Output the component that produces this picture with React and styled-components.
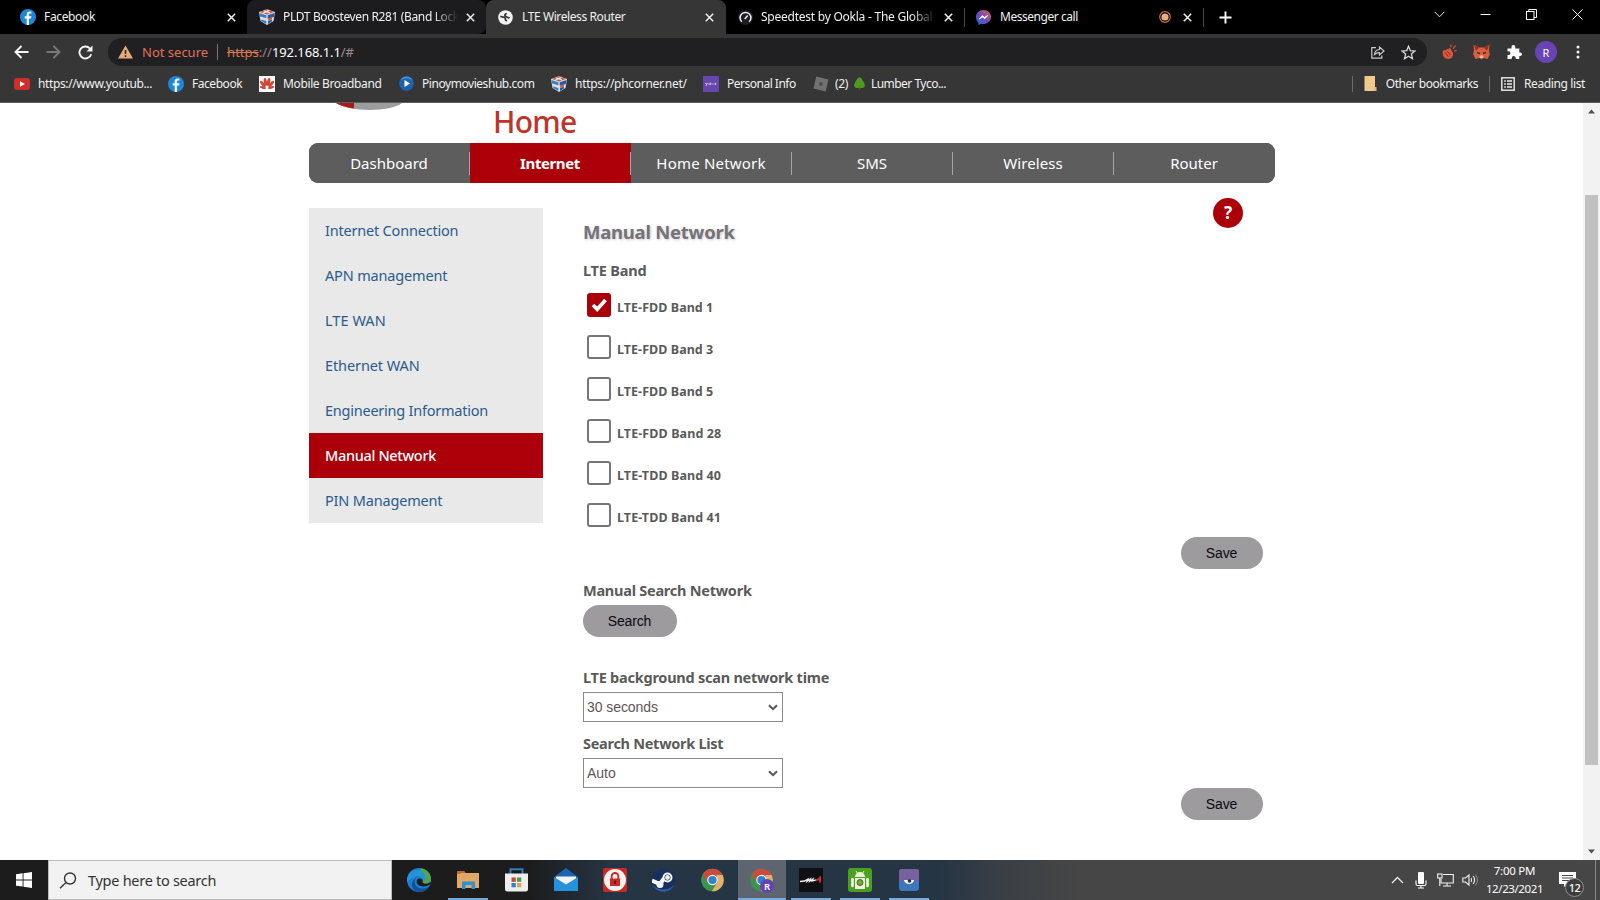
import React from 'react';
import styled, { createGlobalStyle } from 'styled-components';

const Global = createGlobalStyle`
  * { box-sizing: border-box; }
  html, body { margin: 0; padding: 0; background: #fff; overflow: hidden; }
  body { font-family: "Noto Sans", "Open Sans", sans-serif; }
  svg { display: block; flex: none; }
`;

const Screen = styled.div`
  width: 1600px;
  height: 900px;
  display: flex;
  flex-direction: column;
  overflow: hidden;
  background: #fff;
`;

const Text = styled.span`
  letter-spacing: ${p => p.$ls || 0}px;
  white-space: pre;
`;

/* ---------- browser chrome ---------- */
const TabStrip = styled.div`
  height: 34px;
  flex: none;
  display: flex;
  background: #000;
`;

const Tab = styled.div`
  width: ${p => p.$w}px;
  height: 34px;
  display: flex;
  align-items: center;
  padding: 0 ${p => p.$pr ?? 11}px 0 ${p => p.$pl}px;
  background: ${p => p.$bg || '#000'};
  border-radius: ${p => p.$radius || '0'};
  color: #f1f1f1;
  font-size: 12px;
`;

const TabTitle = styled.div`
  flex: 1;
  min-width: 0;
  overflow: hidden;
  margin-left: ${p => p.$gap ?? 8}px;
  line-height: 20px;
  ${p => p.$fade && 'mask-image: linear-gradient(90deg, #000 86%, transparent 100%);'}
`;

const TabDivider = styled.div`
  width: 1px;
  height: 19px;
  margin-top: 8px;
  background: #4a4a4a;
`;

const TabIcons = styled.div`
  display: flex;
  align-items: center;
  gap: 12px;
  margin-left: 8px;
`;

const NewTab = styled.div`
  display: flex;
  align-items: center;
  padding-left: 15px;
`;

const WindowButtons = styled.div`
  margin-left: auto;
  display: flex;
  height: 28px;
  align-items: center;
`;

const WindowButton = styled.div`
  width: 46px;
  display: flex;
  justify-content: center;
`;

const Toolbar = styled.div`
  height: 36px;
  flex: none;
  display: flex;
  align-items: center;
  background: #363636;
  padding: 0 20px 0 14px;
`;

const NavIcons = styled.div`
  display: flex;
  gap: 17px;
  width: 94px;
`;

const Omnibox = styled.div`
  width: 1319px;
  height: 28px;
  border-radius: 14px;
  background: #202022;
  display: flex;
  align-items: center;
  padding: 0 11px 0 10px;
  font-size: 13px;
`;

const NotSecure = styled.span`
  color: #e0705a;
  margin-left: 9px;
`;

const UrlDivider = styled.span`
  width: 1px;
  height: 16px;
  background: #77777a;
  margin: 0 9px;
`;

const Url = styled.div`
  flex: 1;
  white-space: pre;
`;

const UrlPart = styled(Text)`
  color: ${p => p.$c};
  ${p => p.$strike && 'text-decoration: line-through;'}
`;

const OmniIcons = styled.div`
  display: flex;
  gap: 16px;
`;

const Extensions = styled.div`
  display: flex;
  align-items: center;
  margin-left: auto;
  gap: 16px;
`;

const Avatar = styled.div`
  width: 22px;
  height: 22px;
  border-radius: 50%;
  background: #6844b4;
  color: #fff;
  font-size: 11px;
  display: flex;
  align-items: center;
  justify-content: center;
  margin: 0 3px 0 -3px;
`;

const Bookmarks = styled.div`
  height: 33px;
  flex: none;
  display: flex;
  align-items: center;
  background: #363636;
  border-bottom: 1px solid #5c5c5c;
  padding: 0 15px 5px 14px;
  font-size: 12px;
  line-height: 20px;
  color: #f1f1f1;
`;

const Bookmark = styled.div`
  display: flex;
  align-items: center;
  gap: ${p => p.$gap ?? 8}px;
  width: ${p => p.$w ? p.$w + 'px' : 'auto'};
`;

const BookmarkDivider = styled.div`
  width: 1px;
  height: 16px;
  background: #6b6b6b;
  margin: 0 ${p => p.$r}px 0 ${p => p.$l}px;
`;

const BookmarksRight = styled.div`
  display: flex;
  align-items: center;
  margin-left: auto;
`;

/* ---------- page ---------- */
const Viewport = styled.div`
  height: 757px;
  flex: none;
  display: flex;
  background: #fff;
`;

const Page = styled.div`
  width: 966px;
  margin-left: 309px;
  flex: none;
`;

const Brand = styled.div`
  height: 40px;
  display: flex;
  padding-left: 27px;
`;

const BrandName = styled.div`
  margin-left: 91px;
  font-size: 30px;
  line-height: 38px;
  color: #c0332a;
  font-weight: 500;
`;

const MainNav = styled.div`
  height: 40px;
  display: flex;
  border-radius: 9px;
  overflow: hidden;
  background: #5d5d5d;
`;

const MainNavItem = styled.div`
  width: 161px;
  height: 40px;
  display: flex;
  align-items: center;
  justify-content: center;
  padding-right: 1px;
  font-size: 15px;
  color: #fff;
  font-weight: ${p => p.$active ? 700 : 400};
  background: ${p => p.$last ? 'none' : 'linear-gradient(#a5a5a5, #a5a5a5) right 0 top 9px / 1px 23px no-repeat'}
    ${p => p.$active ? '#ab0009' : '#5d5d5d'};
`;

const Body = styled.div`
  display: flex;
  padding-top: 25px;
`;

const SideMenu = styled.div`
  width: 234px;
  height: 315px;
  background: #e9e9e9;
`;

const SideItem = styled.div`
  height: 45px;
  line-height: 45px;
  padding-left: 16px;
  font-size: 14.5px;
  font-weight: ${p => p.$active ? 500 : 400};
  color: ${p => p.$active ? '#fff' : '#2b5b8c'};
  background: ${p => p.$active ? '#ab0009' : 'transparent'};
`;

const Content = styled.div`
  width: 680px;
  margin-left: 40px;
  color: #5a5a5a;
`;

const Heading = styled.div`
  display: flex;
  justify-content: space-between;
  height: 49px;
  padding-right: 20px;
  font-size: 18.5px;
  font-weight: 700;
  line-height: 48px;
  color: #747379;
  text-shadow: 1px 1px 3px #d0c8c8;
`;

const Help = styled.div`
  width: 30px;
  height: 30px;
  margin-top: -10px;
  border-radius: 50%;
  background: #ab0009;
  color: #fff;
  font-size: 17px;
  line-height: 30px;
  text-align: center;
  text-shadow: none;
`;

const Label = styled.div`
  height: ${p => p.$h}px;
  margin-top: ${p => p.$mt || 0}px;
  font-size: 14.5px;
  font-weight: 700;
  line-height: 26px;
`;

const BandRow = styled.div`
  height: 42px;
  display: flex;
  padding-left: 4px;
  font-size: 12.5px;
  font-weight: 700;
  line-height: 30px;
  gap: 6px;
`;

const CheckBox = styled.div`
  width: 24px;
  height: 24px;
  border: 2px solid ${p => p.$checked ? '#ab0009' : '#75757b'};
  border-radius: 3px;
  background: ${p => p.$checked ? '#ab0009' : '#fff'};
`;

const Bands = styled.div`
  height: 244px;
`;

const ActionRow = styled.div`
  height: 32px;
  display: flex;
  justify-content: flex-end;
`;

const Pill = styled.div`
  width: ${p => p.$w}px;
  height: 32px;
  padding-right: 1px;
  border-radius: 16px;
  background: #9d9b9d;
  color: #0c0812;
  font-family: "Liberation Sans", Arial, sans-serif;
  font-size: 14px;
  line-height: 32px;
  text-align: center;
`;

const Select = styled.div`
  width: 200px;
  height: 30px;
  border: 1px solid #8a8a8a;
  display: flex;
  align-items: center;
  justify-content: space-between;
  padding: 0 4px 0 3px;
  font-family: "Liberation Sans", Arial, sans-serif;
  font-size: 14px;
  color: #5f5555;
`;

const ScrollTrack = styled.div`
  width: 17px;
  height: 757px;
  margin-left: auto;
  background: #f2f2f2;
  display: flex;
  flex-direction: column;
  align-items: center;
  justify-content: space-between;
  padding: 6px 0 6px;
`;

const ScrollThumb = styled.div`
  width: 13px;
  height: 570px;
  background: #c1c1c1;
  margin: 81px 0 auto;
`;

/* ---------- taskbar ---------- */
const Taskbar = styled.div`
  height: 40px;
  flex: none;
  display: flex;
  background: linear-gradient(90deg, #1c1c1d 0 530px, #263544 610px 940px, #3a3f45 1000px, #464646 1080px);
`;

const Start = styled.div`
  width: 48px;
  display: flex;
  align-items: center;
  justify-content: center;
`;

const SearchBox = styled.div`
  width: 344px;
  height: 40px;
  border: 1px solid #b9b9b9;
  background: #f2f2f2;
  display: flex;
  align-items: center;
  padding-left: 10px;
  gap: 11px;
  font-size: 14.5px;
  color: #333;
`;

const Apps = styled.div`
  display: flex;
  padding-left: 2px;
`;

const AppButton = styled.div`
  width: 49px;
  height: 40px;
  display: flex;
  align-items: center;
  justify-content: center;
  background: ${p => p.$line
    ? `linear-gradient(#76a9dc, #76a9dc) center bottom / ${p.$active ? 48 : 40}px 2px no-repeat`
    : 'none'} ${p => p.$active ? ', linear-gradient(#5d6670, #5d6670) center / 48px 40px no-repeat' : ''};
`;

const Tray = styled.div`
  margin-left: auto;
  display: flex;
  align-items: center;
  color: #fff;
`;

const TrayIcon = styled.div`
  width: ${p => p.$w}px;
  display: flex;
  justify-content: center;
`;

const Clock = styled.div`
  width: 65px;
  display: flex;
  flex-direction: column;
  align-items: center;
  font-size: 11.5px;
  line-height: 18px;
`;

const Notify = styled.div`
  position: relative;
  width: 48px;
  height: 40px;
  padding: 12px 0 0 12px;
`;

const Count = styled.div`
  position: absolute;
  left: 18px;
  top: 18px;
  width: 19px;
  height: 19px;
  border-radius: 50%;
  border: 1px solid #8d8d8d;
  background: #3c3c3c;
  font-size: 11px;
  font-weight: 500;
  line-height: 17px;
  text-align: center;
  letter-spacing: -0.5px;
`;

const ShowDesktop = styled.div`
  width: 5px;
  height: 40px;
  border-left: 1px solid #8b8b8b;
`;

/* ---------- icons ---------- */
const FacebookIcon = () => (
  <svg width="16" height="16" viewBox="0 0 16 16">
    <circle cx="8" cy="8" r="8" fill="#1e87d8" />
    <path d="M8.9 16V9.6h2.1l.4-2.3H8.9V5.9c0-.8.4-1.3 1.4-1.3h1.1V2.7a9 9 0 0 0-1.7-.1C7.8 2.600 6.700 3.700 6.700 5.600v1.700H4.700v2.300h2V16z" fill="#fff" />
  </svg>
);
const CubeIcon = () => (
  <svg width="16" height="16" viewBox="0 0 16 16">
    <path d="M0 3 8 .3 16 3l-1.500 9L8 16 1.500 12z" fill="#d9dfe8" />
    <path d="M1 3 8 .6 15 3 8 5.400z" fill="#c65a3e" />
    <path d="M5 1.700 11 4M10.500 1.300 4 4.200" stroke="#eee" strokeWidth="1.200" />
    <path d="M.5 4 7.400 6.200v3L1.100 7.500zM2.500 10.500l4.800 1.500v3L2 12z" fill="#3f7fc0" />
    <path d="m15.500 4-6.800 2.200v3.500L14.800 8zM9 12l4-1.500-.3 2.300L9 15z" fill="#2b5a9c" />
    <path d="M9.200 9.500 13 8.200v2L9.200 12z" fill="#d05a3c" />
  </svg>
);
const GlobeIcon = () => (
  <svg width="15" height="15" viewBox="0 0 15 15">
    <circle cx="7.500" cy="7.500" r="7.300" fill="#f3f3f3" />
    <path d="M2.200 6.300c1.300 0 1.800.9 3.200.9 1.500 0 2.300.8 2 1.900-.3.900.3 1.700 1.700 1.400M11.500 8.200c-1-.8-2.200-.4-2.700-1.300-.5-.9-2-.6-2-1.700 0-1 1.300-.8 1.500-2" fill="none" stroke="#363636" strokeWidth="1.700" />
  </svg>
);
const SpeedIcon = () => (
  <svg width="15" height="15" viewBox="0 0 15 15" fill="none">
    <circle cx="7.500" cy="7.500" r="7.500" fill="#1c1c24" />
    <path d="M3.800 11.800a5.400 5.400 0 1 1 7.400 0" stroke="#eee" strokeWidth="1.500" />
    <path d="m6.700 8.900 3-3.500" stroke="#eee" strokeWidth="1.500" />
  </svg>
);
const MessengerIcon = () => (
  <svg width="15" height="15" viewBox="0 0 15 15">
    <defs>
      <linearGradient id="msg" x1="0" y1="1" x2="1" y2="0">
        <stop offset="0" stopColor="#1f74d8" />
        <stop offset=".45" stopColor="#6b48c0" />
        <stop offset="1" stopColor="#e0604e" />
      </linearGradient>
    </defs>
    <path d="M7.500 0C3.200 0 0 3 0 7c0 2.200.8 4 2.300 5.200V15l2.500-1.300c4.800 1.300 10.200-1.600 10.200-6.700 0-4-3.200-7-7.500-7z" fill="url(#msg)" />
    <path d="m3.200 9 3-3.400 2.200 1.700 3.400-1.900-3 3.400-2.200-1.700z" fill="#fff" stroke="#fff" strokeWidth=".7" />
  </svg>
);
const CloseIcon = () => (
  <svg width="9" height="9" viewBox="0 0 9 9"><path d="m.8.8 7.400 7.400M8.200.8.8 8.200" stroke="#f0f0f0" strokeWidth="1.500" /></svg>
);
const RecordIcon = () => (
  <svg width="12" height="12" viewBox="0 0 12 12"><circle cx="6" cy="6" r="5.300" fill="none" stroke="#c9695a" strokeWidth="1.200" /><circle cx="6" cy="6" r="3.600" fill="#e8b07c" /></svg>
);
const ArrowIcon = ({ flip, color }) => (
  <svg width="15" height="14" viewBox="0 0 15 14" transform={flip ? 'scale(-1 1)' : undefined}>
    <path d="M14.500 7H1.500M7.500 1 1.500 7l6 6" fill="none" stroke={color} strokeWidth="1.900" />
  </svg>
);
const ReloadIcon = () => (
  <svg width="15" height="15" viewBox="0 0 15 15">
    <path d="M13.200 9.200A6 6 0 1 1 11.800 3.300l1 1" fill="none" stroke="#f5f5f5" strokeWidth="1.900" />
    <path d="M14.500.5v6h-6z" fill="#f5f5f5" />
  </svg>
);
const WarnIcon = () => (
  <svg width="15" height="14" viewBox="0 0 15 14"><path d="M7.500.5 15 13.500H0z" fill="#e5aa78" /><path d="M7.500 5v4M7.500 10.300v1.700" stroke="#242424" strokeWidth="1.500" /></svg>
);
const ShareIcon = () => (
  <svg width="15" height="15" viewBox="0 0 15 15" fill="none" stroke="#c9c9c9" strokeWidth="1.200">
    <path d="M6 2.600H1.800v10.600h10V10.500" />
    <path d="M4.500 9.500c.3-3 2-4.800 5-5V2l4.500 4-4.500 4V7.600c-2 0-3.500.4-5 1.900z" />
  </svg>
);
const StarIcon = () => (
  <svg width="15" height="15" viewBox="0 0 15 15"><path d="m7.500 1.300 1.800 4.300 4.700.4-3.600 3.100 1.100 4.600-4-2.500-4 2.500L4.600 9.100 1 6l4.700-.4z" fill="none" stroke="#d8d8d8" strokeWidth="1.300" /></svg>
);
const ClapIcon = () => (
  <svg width="15" height="16" viewBox="0 0 15 16">
    <path d="M.8 7.500C1 6 2.300 5.300 3.200 6.500L5 5l1.500.3.500-1.200 1.500.5 2.200 3.900c1.400 3.500-1 6.500-4.400 6.500S0 12 .8 7.500z" fill="#d8583f" />
    <path d="m3 8.500 3.200 4M5.300 7.200l3 3.700" stroke="#8e2b22" strokeWidth="1" />
    <path d="M9 3.300 8.700.5M11 4.800l2.500-3.300M12 7.200l3-.8" stroke="#cf4a3b" strokeWidth="1.300" />
  </svg>
);
const FoxIcon = () => (
  <svg width="17" height="16" viewBox="0 0 17 16">
    <path d="m.5.5 5.500 3h5l5.500-3-.5 6 .8 4-2.300 4.500-4-1-2 1.500-2-1.500-4 1L.2 10.500 1 6.500z" fill="#d9603f" />
    <path d="m.8.8 5.200 3-3 3zM16.200.8 11 3.800l3 3z" fill="#9e2c22" />
    <path d="m4 8.500 3 1M13 8.500l-3 1" stroke="#56281f" strokeWidth="1.400" />
    <path d="m6.500 12 2-1 2 1-.5 2H7z" fill="#e7c3a6" />
  </svg>
);
const PuzzleIcon = () => (
  <svg width="16" height="16" viewBox="0 0 16 16"><path d="M1.500 4.500h4V3a1.900 1.900 0 0 1 3.800 0v1.500h4v4h.9a1.800 1.800 0 0 1 0 3.600h-.9V15H9.700v-1a2 2 0 0 0-4 0v1H1.500v-4h1a1.900 1.900 0 0 0 0-3.800h-1z" fill="#fff" /></svg>
);
const DotsIcon = () => (
  <svg width="4" height="14" viewBox="0 0 4 14" fill="#f2f2f2"><circle cx="2" cy="2" r="1.500" /><circle cx="2" cy="7" r="1.500" /><circle cx="2" cy="12" r="1.500" /></svg>
);
const YoutubeIcon = () => (
  <svg width="16" height="12" viewBox="0 0 16 12"><rect width="16" height="12" rx="3" fill="#cf2f2a" /><path d="M6 3.300v5.400L11 6z" fill="#fff" /></svg>
);
const HuaweiIcon = () => (
  <svg width="16" height="16" viewBox="0 0 16 16">
    <rect width="16" height="16" fill="#fff" />
    <g fill="#cf4636">
      <ellipse cx="6.400" cy="6" rx="1.600" ry="4" transform="rotate(-10 6.400 6)" />
      <ellipse cx="9.600" cy="6" rx="1.600" ry="4" transform="rotate(10 9.600 6)" />
      <ellipse cx="3.800" cy="8" rx="1.500" ry="4" transform="rotate(-38 3.800 8)" />
      <ellipse cx="12.200" cy="8" rx="1.500" ry="4" transform="rotate(38 12.200 8)" />
      <ellipse cx="3.800" cy="11.500" rx="3.200" ry="1.300" transform="rotate(12 3.800 11.500)" />
      <ellipse cx="12.200" cy="11.500" rx="3.200" ry="1.300" transform="rotate(-12 12.200 11.500)" />
    </g>
  </svg>
);
const PlayIcon = () => (
  <svg width="15" height="15" viewBox="0 0 15 15"><circle cx="7.500" cy="7.500" r="7.300" fill="#1f62b4" /><path d="M1.500 4a7 7 0 0 1 12 0A12 12 0 0 0 1.500 4z" fill="#3f9ad8" /><path d="M5.500 4v7l5.500-3.500z" fill="#fff" /></svg>
);
const YahooIcon = () => (
  <svg width="16" height="16" viewBox="0 0 16 16"><rect width="16" height="16" fill="#6746ae" /><path d="m2.500 7 1 1.500M4.500 7 3 9.800M5.300 8h1.500M7.300 6.500V9M8.500 8h1.200M10.500 8h1.200M12.700 6.800V9" stroke="#e9e2f6" strokeWidth=".9" /></svg>
);
const RobloxIcon = () => (
  <svg width="16" height="16" viewBox="0 0 16 16"><path d="M3.200.5 15.500 3.500 12.600 15.500.5 12.500z" fill="#717171" /><path d="m6.700 6 3.200.8-.8 3.200-3.200-.8z" fill="#4c4c4c" /></svg>
);
const TreeIcon = () => (
  <svg width="11" height="13" viewBox="0 0 11 13"><path d="M5.500.3C7.500.8 8 2 8.300 3.200 9.500 4 10 5 9.900 6c1.600 1.500 1.300 4.700-1.400 4.900h-6C-.2 10.700-.5 7.500 1.100 6 1 5 1.500 4 2.700 3.200 3 2 3.500.8 5.500.3z" fill="#4e9a20" /><path d="M4.700 10.500h1.600v2.300H4.700z" fill="#7b4a2a" /></svg>
);
const FolderIcon = () => (
  <svg width="13" height="15" viewBox="0 0 13 15"><path d="M.5 0h10.500v11h1.500v4H.5z" fill="#f0c98b" /><path d="M11 11v4" stroke="#d3a767" /></svg>
);
const ReadingIcon = () => (
  <svg width="14" height="14" viewBox="0 0 14 14" fill="none" stroke="#eee"><rect x=".8" y=".8" width="12.400" height="12.400" strokeWidth="1.400" /><path d="M3.200 4h1.600M6 4h5M3.200 7h1.600M6 7h5M3.200 10h1.600M6 10h5" strokeWidth="1.400" /></svg>
);
const LogoArc = () => (
  <svg width="66" height="40" viewBox="0 0 66 40">
    <path d="M0 0h66C54 9.300 14 9.300 0 0z" fill="#9d9d9d" />
    <path d="M0 0h18v5.600C10 4.300 4 2.500 0 0z" fill="#ab1a1a" />
  </svg>
);
const CheckIcon = () => (
  <svg width="20" height="20" viewBox="0 0 20 20"><path d="m4 10 4.200 4.300L16.500 5" fill="none" stroke="#fff" strokeWidth="3.600" /></svg>
);
const SelectArrow = () => (
  <svg width="10" height="7" viewBox="0 0 10 7"><path d="m1 1.200 4 4 4-4" fill="none" stroke="#555" strokeWidth="2" /></svg>
);
const Triangle = ({ down }) => (
  <svg width="7" height="5" viewBox="0 0 7 5"><path d={down ? 'M0 .5h7L3.500 4.500z' : 'M0 4.500h7L3.500.5z'} fill="#505050" /></svg>
);

const WindowsLogo = () => (
  <svg width="16" height="16" viewBox="0 0 16 16" fill="#fff"><path d="M0 2.200 6.600 1.300v6.200H0zM7.500 1.200 16 0v7.500H7.500zM0 8.400h6.600v6.200L0 13.700zM7.500 8.400H16V16l-8.500-1.200z" /></svg>
);
const MagnifierIcon = () => (
  <svg width="18" height="17" viewBox="0 0 18 17" fill="none" stroke="#333" strokeWidth="1.400"><circle cx="11" cy="6.500" r="5.500" /><path d="M7 10.500 1 16.200" /></svg>
);
const EdgeIcon = () => (
  <svg width="24" height="24" viewBox="0 0 24 24">
    <circle cx="12" cy="12" r="12" fill="#1d80cf" />
    <path d="M14 .2C21 1 24.500 7 24 12c-.5 3-3.500 4.500-8 3.600-1.500-.4-1.500-1.200-.6-2.200C17.500 10 16 6 12 4z" fill="#55a64a" />
    <path d="M1 8C4 1 14-.5 18 7c1.500 3 .2 5-1.500 6.500C16 9 12 7 8 8.500 4.500 10 1.500 12 0 14-.2 12 0 10 1 8z" fill="#2493d8" />
    <path d="M9.500 10C6 12.500 8 20 14.500 20.500c3 .2 5.500-.7 7.500-2C19 23 14 25 9.500 23.500 3 21 3.500 12 9.500 10z" fill="#164f9c" />
    <path d="M12 10.500c-2.500.5-3.500 4-.5 6.500 3 2.300 8 1.700 11.500-.5.800-1 .8-2 .5-2.500-3 2.500-8 2.200-8-.2.800-1.500-.5-3.800-3.500-3.300z" fill="#1d1d1f" />
  </svg>
);
const ExplorerIcon = () => (
  <svg width="22" height="20" viewBox="0 0 22 20">
    <path d="M0 1h7l1.500 2H22v15H0z" fill="#e2a765" /><path d="M0 1h7l1.500 2H4L3 4H0z" fill="#c7633f" />
    <path d="M5 19v-7.500h13V19h-3.500v-4h-6v4z" fill="#2d92d2" />
  </svg>
);
const StoreIcon = () => (
  <svg width="23" height="24" viewBox="0 0 23 24">
    <path d="M5.500 7V1.200h12V7" fill="none" stroke="#2f7db8" strokeWidth="2" />
    <path d="M0 5.500h23V21a2.500 2.500 0 0 1-2.500 2.500h-18A2.500 2.500 0 0 1 0 21z" fill="#eee" />
    <path d="M6.500 9.500h4.300v4.300H6.500z" fill="#c54a35" /><path d="M12 9.500h4.300v4.300H12z" fill="#4f9944" />
    <path d="M6.500 15h4.300v4.300H6.500z" fill="#2c85ca" /><path d="M12 15h4.300v4.300H12z" fill="#e0a055" />
  </svg>
);
const MailIcon = () => (
  <svg width="24" height="24" viewBox="0 0 24 24"><path d="M0 9 12 0l12 9v14H0z" fill="#1a63b0" /><path d="M2 8.500h20v5L12 17 2 13z" fill="#f3f3f3" /><path d="m0 9 12 7.500L24 9v14H0z" fill="#2592dc" /></svg>
);
const LockAppIcon = () => (
  <svg width="24" height="24" viewBox="0 0 24 24"><rect width="24" height="24" rx="2" fill="#c92a28" /><circle cx="12" cy="12" r="11" fill="#f5f1ee" /><path d="M8.700 11V8.300a3.300 3.300 0 0 1 6.600 0V11" fill="none" stroke="#c92a28" strokeWidth="1.800" /><rect x="7" y="10.500" width="10" height="7.500" fill="#c92a28" /><path d="M12 12.500v3.500" stroke="#451818" strokeWidth="1.500" /></svg>
);
const SteamIcon = () => (
  <svg width="23" height="23" viewBox="0 0 23 23">
    <circle cx="11.500" cy="11.500" r="11.500" fill="#172f5d" />
    <path d="M1 16c5 6 15 6 21 0-3 8-17 10-21 0z" fill="#2763a3" />
    <path d="m0 11.500 8 3.500 4-5.500" fill="none" stroke="#fff" strokeWidth="4" />
    <circle cx="8" cy="15.500" r="3.500" fill="#f2f2f2" />
    <circle cx="15.500" cy="8.500" r="4" fill="#263544" stroke="#f2f2f2" strokeWidth="2" /><circle cx="15.500" cy="8.500" r="2.400" fill="#eee" />
  </svg>
);
const ChromeIcon = ({ badge }) => (
  <svg width="24" height="25" viewBox="0 0 24 25">
    <circle cx="11.500" cy="12" r="11.300" fill="#3c934c" />
    <path d="M1.700 6.300A11.300 11.300 0 0 1 21.300 6.300L22 8H11.500L6.700 14.800z" fill="#c94c3d" />
    <path d="M21.600 7A11.300 11.300 0 0 1 10.800 23.300l5.500-8.700L15.500 7z" fill="#e5b06b" />
    <circle cx="11.500" cy="12" r="5.300" fill="#f2f2f2" /><circle cx="11.500" cy="12" r="4.100" fill="#2f83cd" />
    {badge && <circle cx="17" cy="18" r="7" fill="#6443b2" />}
    {badge && <text x="17" y="21.500" fontSize="9.500" fontWeight="600" textAnchor="middle" fill="#fff">R</text>}
  </svg>
);
const BladeIcon = () => (
  <svg width="24" height="24" viewBox="0 0 24 24">
    <rect width="24" height="24" fill="#101012" />
    <path d="m1 13.500 4.500-.5 3.500-2-1 2.500 3.500-2.500-.8 2.300 3.300-2.300-.8 2 4.300-1.200" fill="none" stroke="#f0f0f0" strokeWidth="1.300" />
    <path d="m16.500 12.500 5.500-5v7h-2v-2.200l-2 .4z" fill="#cf302c" />
  </svg>
);
const AndroidIcon = () => (
  <svg width="24" height="24" viewBox="0 0 24 24">
    <rect width="24" height="24" rx="3" fill="#4aa021" />
    <path d="M7 9a5 5 0 0 1 10 0z" fill="#efefcf" /><path d="m8 3 1.500 2.500M16 3l-1.500 2.500" stroke="#efefcf" />
    <rect x="7" y="10" width="10" height="11" fill="#f2f0dc" /><path d="M4.500 11v7M19.500 11v7" stroke="#f6f6ee" strokeWidth="2.600" strokeLinecap="round" />
    <circle cx="12" cy="14.500" r="3" fill="#74a83c" stroke="#3e6b28" />
  </svg>
);
const RobotIcon = () => (
  <svg width="20" height="22" viewBox="0 0 20 22">
    <rect width="20" height="22" rx="3" fill="#3d78be" /><path d="M0 3a3 3 0 0 1 3-3h14a3 3 0 0 1 3 3v9H0z" fill="#75629e" />
    <path d="M5 11h10a5 4 0 0 1-10 0z" fill="#f3f3f3" /><circle cx="10.500" cy="12" r="1.800" fill="#222c40" />
  </svg>
);
const ChevronUp = () => (
  <svg width="13" height="8" viewBox="0 0 13 8"><path d="m1 7 5.500-5.500L12 7" fill="none" stroke="#eee" strokeWidth="1.300" /></svg>
);
const MicIcon = () => (
  <svg width="12" height="17" viewBox="0 0 12 17"><rect x="3" y="0" width="6" height="12" rx="1" fill="#fff" /><path d="M1 8.500v3.500q0 1.500 1.500 1.500h7q1.500 0 1.500-1.500V8.500M6 13.500V16M3 16h6" fill="none" stroke="#fff" strokeWidth="1.100" /></svg>
);
const NetworkIcon = () => (
  <svg width="17" height="14" viewBox="0 0 17 14" fill="none" stroke="#f2f2f2" strokeWidth="1.100"><path d="M6 1.500h10.300v8.500H4V6" /><rect x=".7" y="1" width="4.300" height="4" /><path d="M2.800 5v8M10 10v3M6 13h8" /></svg>
);
const SpeakerIcon = () => (
  <svg width="17" height="14" viewBox="0 0 17 14" fill="none" stroke="#f2f2f2" strokeWidth="1.100"><path d="M.8 5h2.700L7 2v10L3.500 9H.8zM9 5q1.300 2 0 4M11.200 3q2.800 4 0 8" /><path d="M13.500 1.500q4 5.500 0 11" stroke="#888" /></svg>
);
const NoteIcon = () => (
  <svg width="17" height="16" viewBox="0 0 17 16"><path d="M0 0h17v12H8l-3 3v-3H0z" fill="#fff" /><path d="M3 3.500h11M3 6h11M3 8.500h8" stroke="#464646" /></svg>
);

/* ---------- data ---------- */
const navItems = [
  ['Dashboard', 0], ['Internet', -0.4], ['Home Network', 0.2], ['SMS', 0], ['Wireless', 0.1], ['Router', 0],
];
const sideItems = [
  ['Internet Connection', -0.2], ['APN management', -0.17], ['LTE WAN', 0.05], ['Ethernet WAN', -0.1],
  ['Engineering Information', -0.24], ['Manual Network', -0.34], ['PIN Management', -0.18],
];
const bands = ['LTE-FDD Band 1', 'LTE-FDD Band 3', 'LTE-FDD Band 5', 'LTE-FDD Band 28', 'LTE-TDD Band 40', 'LTE-TDD Band 41'];
const apps = [
  [EdgeIcon], [ExplorerIcon, true], [StoreIcon], [MailIcon], [LockAppIcon], [SteamIcon], [ChromeIcon],
  [ChromeIcon, true, true], [BladeIcon, true], [AndroidIcon, true], [RobotIcon, true],
];

export default function App() {
  return (
    <Screen>
      <Global />
      <TabStrip>
        <Tab $w={247} $pl={20}>
          <FacebookIcon />
          <TabTitle><Text $ls={-0.35}>Facebook</Text></TabTitle>
          <TabIcons><CloseIcon /></TabIcons>
        </Tab>
        <Tab $w={239} $pl={12} $bg="#1c1c1e" $radius="8px 8px 8px 0">
          <CubeIcon />
          <TabTitle $fade><Text $ls={-0.37}>PLDT Boosteven R281 (Band Lock</Text></TabTitle>
          <TabIcons><CloseIcon /></TabIcons>
        </Tab>
        <Tab $w={240} $pl={12} $pr={12} $bg="#363636" $radius="8px 8px 0 0">
          <GlobeIcon />
          <TabTitle $gap={9}><Text $ls={-0.4}>LTE Wireless Router</Text></TabTitle>
          <TabIcons><CloseIcon /></TabIcons>
        </Tab>
        <Tab $w={238} $pl={12}>
          <SpeedIcon />
          <TabTitle $fade><Text $ls={-0.24}>Speedtest by Ookla - The Global</Text></TabTitle>
          <TabIcons><CloseIcon /></TabIcons>
        </Tab>
        <TabDivider />
        <Tab $w={238} $pl={11}>
          <MessengerIcon />
          <TabTitle $gap={9}><Text $ls={-0.46}>Messenger call</Text></TabTitle>
          <TabIcons><RecordIcon /><CloseIcon /></TabIcons>
        </Tab>
        <TabDivider />
        <NewTab>
          <svg width="13" height="13" viewBox="0 0 13 13"><path d="M6.500.5v12M.5 6.500h12" stroke="#fff" strokeWidth="1.900" /></svg>
        </NewTab>
        <WindowButtons>
          <WindowButton><svg width="11" height="7" viewBox="0 0 11 7"><path d="m.7.8 4.800 5 4.800-5" fill="none" stroke="#ddd" /></svg></WindowButton>
          <WindowButton><svg width="11" height="3" viewBox="0 0 11 3"><path d="M.5 1.500h10" stroke="#fff" /></svg></WindowButton>
          <WindowButton><svg width="11" height="11" viewBox="0 0 11 11" fill="none" stroke="#fff"><rect x=".5" y="2.500" width="7.500" height="8" /><path d="M2.800 2.500V.5h7.700v8H8" /></svg></WindowButton>
          <WindowButton><svg width="11" height="11" viewBox="0 0 11 11"><path d="m.5.5 10 10M10.500.5l-10 10" stroke="#fff" /></svg></WindowButton>
        </WindowButtons>
      </TabStrip>

      <Toolbar>
        <NavIcons><ArrowIcon color="#f5f5f5" /><ArrowIcon flip color="#77777c" /><ReloadIcon /></NavIcons>
        <Omnibox>
          <WarnIcon />
          <NotSecure>Not secure</NotSecure>
          <UrlDivider />
          <Url>
            <UrlPart $c="#d97a52" $strike>https</UrlPart><UrlPart $c="#a08288">://</UrlPart>
            <UrlPart $c="#fff" $ls={-0.1}>192.168.1.1</UrlPart><UrlPart $c="#a08c98">/#</UrlPart>
          </Url>
          <OmniIcons><ShareIcon /><StarIcon /></OmniIcons>
        </Omnibox>
        <Extensions>
          <ClapIcon /><FoxIcon /><PuzzleIcon />
          <Avatar>R</Avatar>
          <DotsIcon />
        </Extensions>
      </Toolbar>

      <Bookmarks>
        <Bookmark $w={154}><YoutubeIcon /><Text $ls={-0.38}>https://www.youtub...</Text></Bookmark>
        <Bookmark $w={91}><FacebookIcon /><Text $ls={-0.45}>Facebook</Text></Bookmark>
        <Bookmark $w={140}><HuaweiIcon /><Text $ls={-0.37}>Mobile Broadband</Text></Bookmark>
        <Bookmark $w={152}><PlayIcon /><Text $ls={-0.45}>Pinoymovieshub.com</Text></Bookmark>
        <Bookmark $w={152}><CubeIcon /><Text $ls={-0.28}>https://phcorner.net/</Text></Bookmark>
        <Bookmark $w={110}><YahooIcon /><Text $ls={-0.5}>Personal Info</Text></Bookmark>
        <Bookmark $gap={6}><RobloxIcon /><Text $ls={-0.4}>(2)</Text><TreeIcon /><Text $ls={-0.52}>Lumber Tyco...</Text></Bookmark>
        <BookmarksRight>
          <BookmarkDivider $l={0} $r={11} />
          <Bookmark $gap={9}><FolderIcon /><Text $ls={-0.48}>Other bookmarks</Text></Bookmark>
          <BookmarkDivider $l={11} $r={11} />
          <Bookmark $gap={9}><ReadingIcon /><Text $ls={-0.38}>Reading list</Text></Bookmark>
        </BookmarksRight>
      </Bookmarks>

      <Viewport>
        <Page>
          <Brand><LogoArc /><BrandName><Text $ls={-0.7}>Home</Text></BrandName></Brand>
          <MainNav>
            {navItems.map(([t, ls], i) => (
              <MainNavItem key={t} $active={i === 1} $last={i === 5}><Text $ls={ls}>{t}</Text></MainNavItem>
            ))}
          </MainNav>
          <Body>
            <SideMenu>
              {sideItems.map(([t, ls], i) => (
                <SideItem key={t} $active={i === 5}><Text $ls={ls}>{t}</Text></SideItem>
              ))}
            </SideMenu>
            <Content>
              <Heading><Text $ls={-0.25}>Manual Network</Text><Help>?</Help></Heading>
              <Label $h={36}><Text $ls={-0.2}>LTE Band</Text></Label>
              <Bands>
                {bands.map((b, i) => (
                  <BandRow key={b}>
                    <CheckBox $checked={i === 0}>{i === 0 && <CheckIcon />}</CheckBox>
                    <Text $ls={i > 2 ? 0.1 : 0.05}>{b}</Text>
                  </BandRow>
                ))}
              </Bands>
              <ActionRow><Pill $w={82}><Text $ls={-0.1}>Save</Text></Pill></ActionRow>
              <Label $h={28} $mt={8}><Text $ls={-0.25}>Manual Search Network</Text></Label>
              <Pill $w={94}><Text $ls={-0.15}>Search</Text></Pill>
              <Label $h={28} $mt={27}><Text $ls={-0.24}>LTE background scan network time</Text></Label>
              <Select><Text $ls={-0.07}>30 seconds</Text><SelectArrow /></Select>
              <Label $h={28} $mt={8}><Text $ls={-0.28}>Search Network List</Text></Label>
              <Select><Text $ls={0}>Auto</Text><SelectArrow /></Select>
              <ActionRow><Pill $w={82}><Text $ls={-0.1}>Save</Text></Pill></ActionRow>
            </Content>
          </Body>
        </Page>
        <ScrollTrack><Triangle /><ScrollThumb /><Triangle down /></ScrollTrack>
      </Viewport>

      <Taskbar>
        <Start><WindowsLogo /></Start>
        <SearchBox><MagnifierIcon /><Text $ls={-0.28}>Type here to search</Text></SearchBox>
        <Apps>
          {apps.map(([Icon, line, active], i) => (
            <AppButton key={i} $line={line} $active={active}><Icon badge={active} /></AppButton>
          ))}
        </Apps>
        <Tray>
          <TrayIcon $w={24}><ChevronUp /></TrayIcon>
          <TrayIcon $w={24}><MicIcon /></TrayIcon>
          <TrayIcon $w={25}><NetworkIcon /></TrayIcon>
          <TrayIcon $w={24}><SpeakerIcon /></TrayIcon>
          <Clock><Text $ls={-0.25}>7:00 PM</Text><Text $ls={-0.4}>12/23/2021</Text></Clock>
          <Notify><NoteIcon /><Count>12</Count></Notify>
          <ShowDesktop />
        </Tray>
      </Taskbar>
    </Screen>
  );
}
